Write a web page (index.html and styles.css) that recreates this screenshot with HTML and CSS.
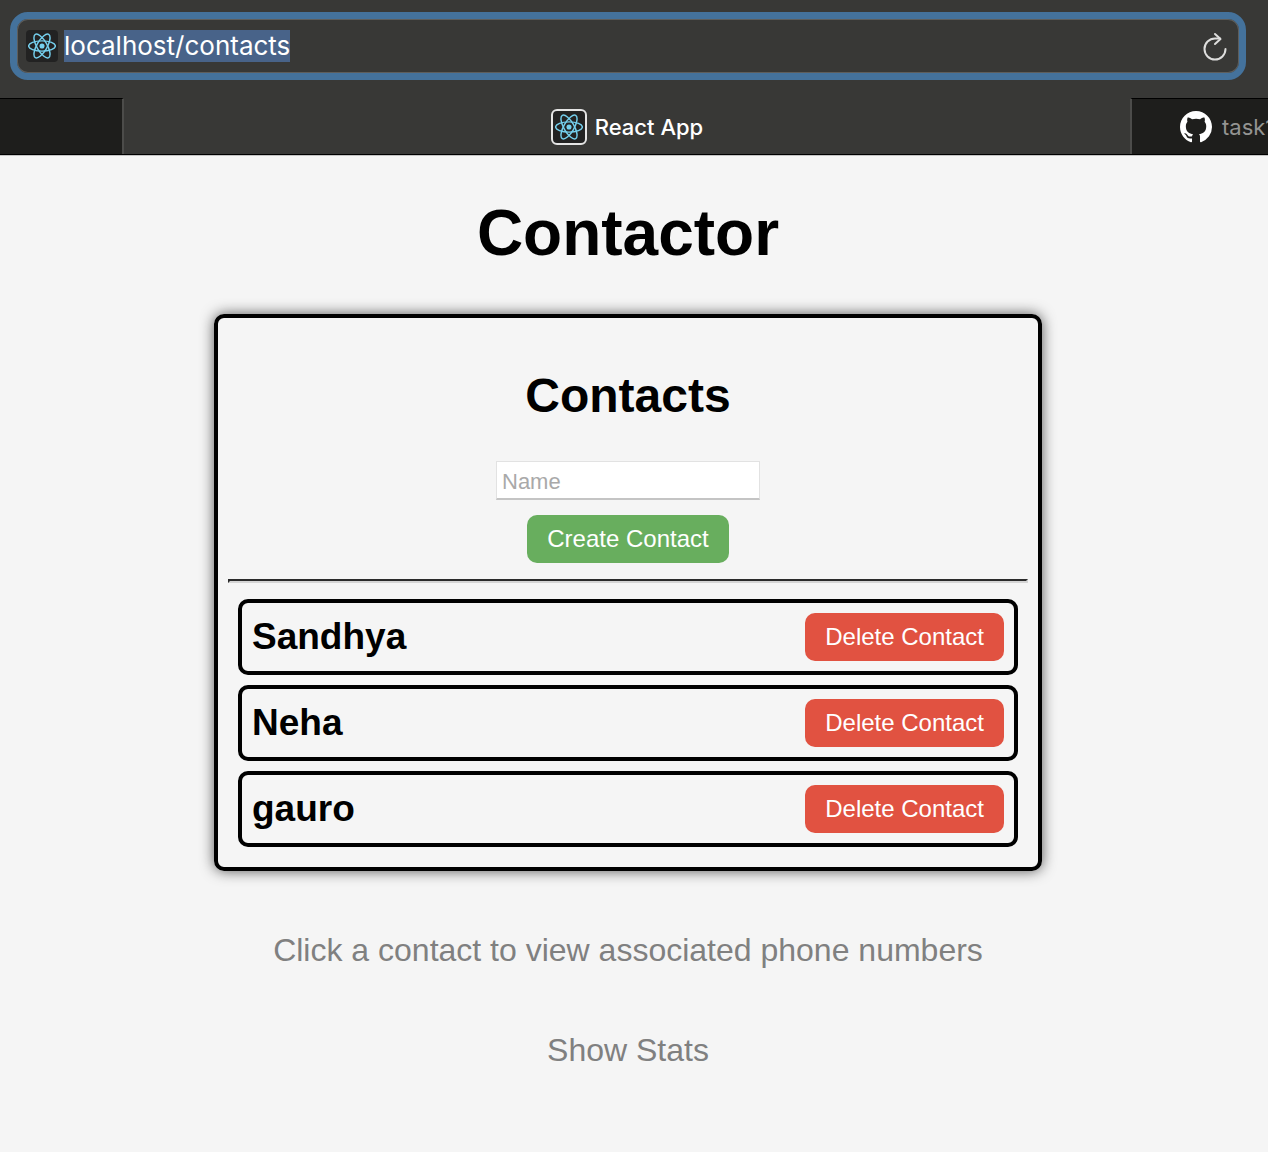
FILE: index.html
```html
<!DOCTYPE html>
<html lang="en">
<head>
  <meta charset="utf-8">
  <meta name="viewport" content="width=device-width, initial-scale=1">
  <title>React App</title>
  <link rel="stylesheet" href="styles.css">
</head>
<body>
  <svg class="symbols" aria-hidden="true">
    <symbol id="react-logo" viewBox="-11.5 -10.5 23 21">
      <circle r="2.1" fill="currentColor"/>
      <g fill="none" stroke="currentColor" stroke-width="1.2">
        <ellipse rx="11" ry="4.2"/>
        <ellipse rx="11" ry="4.2" transform="rotate(60)"/>
        <ellipse rx="11" ry="4.2" transform="rotate(120)"/>
      </g>
    </symbol>
  </svg>

  <header class="browser">
    <div class="toolbar">
      <div class="address">
        <span class="favicon"><svg class="react"><use href="#react-logo"/></svg></span>
        <input class="address-input" id="address" type="text" value="localhost/contacts" aria-label="Address" spellcheck="false">
        <button class="reload" type="button" aria-label="Reload">
          <svg width="26" height="30" viewBox="0 0 26 30" fill="none" stroke="currentColor" stroke-width="2" stroke-linecap="round" stroke-linejoin="round">
            <path d="M23.500 18A10.500 10.500 0 1 1 13 7.500h5"/>
            <path d="M13 3 18.500 8 13 13"/>
          </svg>
        </button>
      </div>
    </div>
    <nav class="tabs" aria-label="Tabs">
      <a class="tab tab-previous" href="#" aria-label="Previous tab"></a>
      <a class="tab tab-active" href="#" aria-current="page">
        <span class="favicon favicon-outlined"><svg class="react"><use href="#react-logo"/></svg></span>
        <span>React App</span>
      </a>
      <a class="tab tab-next" href="#">
        <svg class="github" width="32" height="32" viewBox="0 0 16 16" fill="currentColor" aria-hidden="true"><path d="M8 0C3.580 0 0 3.580 0 8c0 3.540 2.290 6.530 5.470 7.590.4.070.55-.17.55-.38 0-.19-.01-.82-.01-1.490-2.010.37-2.530-.49-2.690-.94-.09-.23-.48-.94-.82-1.130-.28-.15-.68-.52-.01-.53.63-.01 1.080.58 1.230.82.72 1.210 1.870.87 2.330.66.07-.52.28-.87.51-1.070-1.780-.2-3.640-.89-3.640-3.950 0-.87.31-1.590.82-2.150-.08-.2-.36-1.020.08-2.120 0 0 .67-.21 2.200.82.64-.18 1.320-.27 2-.27s1.360.09 2 .27c1.530-1.040 2.200-.82 2.200-.82.44 1.100.16 1.920.08 2.120.51.56.82 1.270.82 2.150 0 3.070-1.870 3.750-3.650 3.950.29.25.54.73.54 1.480 0 1.070-.01 1.930-.01 2.200 0 .21.15.46.55.38A8.010 8.010 0 0 0 16 8c0-4.420-3.580-8-8-8z"/></svg>
        <span>task1</span>
      </a>
    </nav>
  </header>

  <main class="app">
    <h1 class="title">Contactor</h1>
    <section class="card">
      <h2 class="card-title">Contacts</h2>
      <form class="create">
        <input class="name-input" type="text" placeholder="Name" aria-label="Name">
        <button class="button button-create" type="button">Create Contact</button>
      </form>
      <hr class="rule">
      <ul class="contacts">
        <li class="contact"><h3 class="contact-name">Sandhya</h3><button class="button button-delete" type="button">Delete Contact</button></li>
        <li class="contact"><h3 class="contact-name">Neha</h3><button class="button button-delete" type="button">Delete Contact</button></li>
        <li class="contact"><h3 class="contact-name">gauro</h3><button class="button button-delete" type="button">Delete Contact</button></li>
      </ul>
    </section>
    <p class="note">Click a contact to view associated phone numbers</p>
    <a class="note" href="#stats">Show Stats</a>
  </main>
  <script src="script.js"></script>
</body>
</html>
```
FILE: styles.css
```css
* {
  box-sizing: border-box;
}

body {
  margin: 0;
  background: #f5f5f5;
  color: #000;
  font-family: "Liberation Sans", Arial, sans-serif;
}

.symbols {
  display: none;
}

/* Browser frame */

.browser {
  background: #383836;
  border-bottom: 1px solid #000;
  box-shadow: 0 1px 0 #c4c4c4;
  color: #fff;
  font-family: Inter, "Liberation Sans", sans-serif;
}

.toolbar {
  padding: 12px 22px 18px 10px;
}

.address {
  display: flex;
  align-items: center;
  height: 68px;
  padding: 0 11px 0 9px;
  border: 7px solid #44729c;
  border-radius: 18px;
  box-shadow: inset 0 0 0 1px #5e5e5c;
}

.favicon {
  display: flex;
  flex: none;
  align-items: center;
  justify-content: center;
  width: 32px;
  height: 32px;
  border-radius: 4px;
  background: #222;
  color: #75d0ee;
}

.favicon-outlined {
  width: 36px;
  height: 36px;
  border: 2px solid #e4e4e4;
  border-radius: 6px;
}

.react {
  width: 28px;
  height: 26px;
}

.address-input {
  flex: 1;
  min-width: 0;
  height: 32px;
  margin-left: 6px;
  padding: 0;
  border: 0;
  outline: 0;
  background: none;
  color: #fff;
  font: 26px/32px Inter, "Liberation Sans", sans-serif;
}

.address-input::selection {
  background: #486389;
  color: #fff;
}

.reload {
  display: flex;
  padding: 0;
  border: 0;
  background: none;
  color: #dededd;
}

.tabs {
  display: flex;
  height: 56px;
  overflow: hidden;
}

.tab {
  display: flex;
  align-items: center;
  gap: 8px;
  border-top: 1px solid #000;
  color: #fff;
  font-size: 22px;
  text-decoration: none;
  white-space: nowrap;
}

.tab-previous,
.tab-next {
  flex: none;
  background: #1e1e1c;
}

.tab-previous {
  width: 124px;
  border-right: 2px solid #4c4c4a;
}

.tab-active {
  flex: 1;
  justify-content: center;
  border-top-color: #383836;
  font-weight: 500;
}

.tab-next {
  gap: 10px;
  width: 138px;
  padding-left: 48px;
  border-left: 2px solid #4c4c4a;
  color: #949492;
  overflow: hidden;
}

.github {
  flex: none;
  color: #fff;
}

/* Contacts page */

.app {
  display: flex;
  flex-direction: column;
  align-items: center;
  padding: 41px 12px 64px 0;
}

.title {
  margin: 0 0 44px;
  font-size: 64px;
  line-height: 74px;
}

.card {
  width: 100%;
  max-width: 828px;
  padding: 50px 10px 20px;
  border: 4px solid #000;
  border-radius: 10px;
  box-shadow: 0 0 14px #555;
}

.card-title {
  margin: 0 0 38px;
  font-size: 48px;
  line-height: 55px;
  text-align: center;
}

.create {
  display: flex;
  flex-direction: column;
  align-items: center;
  gap: 15px;
}

.name-input {
  width: 264px;
  height: 39px;
  padding: 3px 5px 0;
  border: 1px solid #e2e2e2;
  border-bottom: 2px solid #c4c4c4;
  border-radius: 0;
  background: #fff;
  font: 22px "Liberation Sans", Arial, sans-serif;
}

.name-input::placeholder {
  color: #a9a9a9;
}

.button {
  height: 48px;
  padding: 0 20px;
  border: 0;
  border-radius: 10px;
  color: #fff;
  font: 24px "Liberation Sans", Arial, sans-serif;
}

.button-create {
  background: #68ae5e;
}

.button-delete {
  background: #e15241;
}

.rule {
  margin: 16px 0;
  border: 2px solid;
  border-color: #2b2b2b #d5d5d5 #d5d5d5 #2b2b2b;
}

.contacts {
  display: grid;
  gap: 10px;
  margin: 0;
  padding: 0 10px;
  list-style: none;
}

.contact {
  display: flex;
  align-items: center;
  justify-content: space-between;
  padding: 10px;
  border: 4px solid #000;
  border-radius: 10px;
}

.contact-name {
  margin: 0;
  font-size: 37px;
  line-height: 44px;
}

.note {
  margin: 60px 0 0;
  color: #808080;
  font-size: 32px;
  line-height: 38px;
  text-align: center;
  text-decoration: none;
}

.note + .note {
  margin-top: 62px;
}
```
FILE: script.js
```js
const address = document.getElementById("address");
address.focus();
address.select();
```
